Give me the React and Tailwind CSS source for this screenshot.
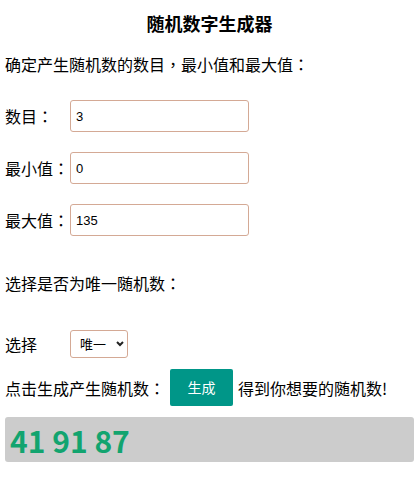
import React from "react";

function Field({ label, value }) {
  return (
    <div className="flex items-center h-[32px]">
      <span className="w-[65px] text-[16px] leading-[24px]">{label}</span>
      <input
        readOnly
        value={value}
        className="w-[179px] h-[32px] border border-[#d4a995] rounded-[3px] pl-[5px] text-[13px] text-black font-['Liberation_Sans',Arial,sans-serif] outline-none"
      />
    </div>
  );
}

export default function App() {
  return (
    <div className="bg-white w-[416px] h-[481px] text-black font-['Noto_Sans_CJK_TC','Noto_Sans_CJK_SC',sans-serif] pl-[5px] pr-[2px] overflow-hidden">
      <h2 className="mt-[11px] h-[24px] leading-[24px] text-center text-[18px] font-bold">随机数字生成器</h2>
      <p className="mt-[17px] text-[16px] leading-[24px]">确定产生随机数的数目，最小值和最大值：</p>
      <div className="mt-[24px] flex flex-col gap-[20px]">
        <Field label="数目：" value="3" />
        <Field label="最小值：" value="0" />
        <Field label="最大值：" value="135" />
      </div>
      <p className="mt-[35px] text-[16px] leading-[24px]">选择是否为唯一随机数：</p>
      <div className="mt-[35px] flex items-center h-[28px]">
        <span className="w-[65px] text-[16px] leading-[24px]">选择</span>
        <div className="relative w-[58px] h-[28px]">
          <select className="appearance-none w-full h-full border border-[#d4a995] rounded-[3px] pl-[9px] text-[13px] text-black outline-none bg-white">
            <option>唯一</option>
          </select>
          <svg className="absolute left-[46px] top-[11px] pointer-events-none" width="8" height="6" viewBox="0 0 8 6">
            <path d="M1 1 L4 4 L7 1" stroke="#222" strokeWidth="2" fill="none" />
          </svg>
        </div>
      </div>
      <div className="mt-[11px] flex items-center h-[37px] text-[16px]">
        <span>点击生成产生随机数：</span>
        <button className="ml-[5px] w-[63px] h-[37px] bg-[#009688] text-white text-[14px] rounded-[2px]">生成</button>
        <span className="ml-[5px]">得到你想要的随机数!</span>
      </div>
      <div className="mt-[11px] h-[45px] bg-[#cccccc] rounded-[3px] flex items-center pl-[5px]">
        <span className="text-[30px] font-bold text-[#12a46f] leading-none">41 91 87</span>
      </div>
    </div>
  );
}
